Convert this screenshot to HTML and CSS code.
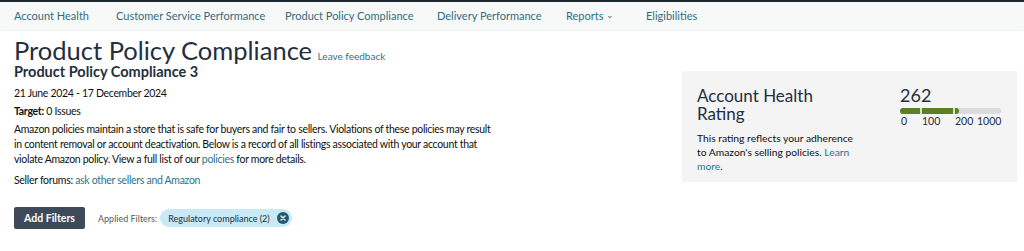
FILE: index.html
```html
<!DOCTYPE html>
<html lang="en">
<head>
  <meta charset="UTF-8" />
  <title>Product Policy Compliance</title>
  <link rel="stylesheet" href="styles.css">
</head>
<body>
  <nav class="topnav">
    <a href="#">Account Health</a>
    <a href="#">Customer Service Performance</a>
    <a href="#">Product Policy Compliance</a>
    <a href="#">Delivery Performance</a>
    <a href="#">Reports <span class="caret">&#8964;</span></a>
    <a href="#">Eligibilities</a>
  </nav>

  <div class="page">
    <div class="main">
      <h1>Product Policy Compliance <a href="#" class="feedback">Leave feedback</a></h1>
      <h2>Product Policy Compliance 3</h2>
      <p class="dates">21 June 2024 - 17 December 2024</p>
      <p class="target"><b>Target:</b> 0 Issues</p>
      <p class="desc">Amazon policies maintain a store that is safe for buyers and fair to sellers. Violations of these policies may result in content removal or account deactivation. Below is a record of all listings associated with your account that violate Amazon policy. View a full list of our <a href="#">policies</a> for more details.</p>
      <p class="forums">Seller forums: <a href="#">ask other sellers and Amazon</a></p>

      <div class="filters">
        <button class="add-btn">Add Filters</button>
        <span class="applied">Applied Filters:</span>
        <span class="chip">Regulatory compliance (2)
          <span class="chip-close">
            <svg width="12" height="12" viewBox="0 0 12 12"><circle cx="6" cy="6" r="6" fill="#1f5a6e"/><path d="M4 4 L8 8 M8 4 L4 8" stroke="#fff" stroke-width="1.4" stroke-linecap="round"/></svg>
          </span>
        </span>
      </div>
    </div>

    <div class="rating-card">
      <div class="rating-text">
        <h3>Account Health Rating</h3>
        <p>This rating reflects your adherence to Amazon's selling policies. <a href="#">Learn more</a>.</p>
      </div>
      <div class="rating-score">
        <div class="score">262</div>
        <div class="bar">
          <span class="seg seg1"></span>
          <span class="seg seg2"></span>
          <span class="seg seg3"></span>
        </div>
        <div class="ticks">
          <span class="t0">0</span><span class="t100">100</span><span class="t200">200</span><span class="t1000">1000</span>
        </div>
      </div>
    </div>
  </div>
</body>
</html>
```

FILE: styles.css
```css
body {
  margin: 0;
  font-family: 'Lato', 'Noto Sans', sans-serif;
  color: #0f1111;
  background: #fff;
}

a {
  color: #2a7487;
  text-decoration: none;
}

.topnav {
  border-top: 2px solid #1d2b30;
  background: #f7f8f8;
  height: 28px;
  display: flex;
  align-items: center;
  padding-left: 14px;
  box-shadow: 0 1px 2px rgba(0,0,0,0.06);
}

.topnav a {
  font-size: 11px;
  color: #2e6e80;
  position: relative;
  top: -1px;
}

.topnav a:nth-child(1) { width: 102px; }
.topnav a:nth-child(2) { width: 169px; }
.topnav a:nth-child(3) { width: 152px; }
.topnav a:nth-child(4) { width: 129px; }
.topnav a:nth-child(5) { width: 80px; }

.caret {
  font-size: 9px;
  position: relative;
  top: -2px;
}

.page {
  display: flex;
  padding: 0 7px 0 14px;
}

.main {
  flex: 1;
}

h1 {
  margin: 8px 0 0;
  font-size: 25.5px;
  font-weight: 400;
  line-height: 24px;
  color: #232f3e;
}

.feedback {
  font-size: 10px;
  line-height: 10px;
  margin-left: -1px;
}

h2 {
  margin: 1px 0 0;
  font-size: 14.5px;
  font-weight: 700;
  line-height: 18px;
  color: #232f3e;
}

p {
  margin: 0;
  font-size: 10.5px;
  line-height: 15px;
}

.main p {
  letter-spacing: -0.3px;
}

.dates {
  margin-top: 5px;
}

.target {
  margin-top: 3px;
}

.desc {
  width: 480px;
  margin-top: 3px;
}

.forums {
  margin-top: 6px;
}

.filters {
  display: flex;
  align-items: center;
  margin-top: 19px;
}

.add-btn {
  background: #3e4a59;
  color: #fff;
  border: none;
  border-radius: 2px;
  font-family: inherit;
  font-size: 10.5px;
  font-weight: 700;
  width: 71px;
  height: 22px;
  padding: 0;
}

.applied {
  font-size: 9px;
  color: #565959;
  margin-left: 13px;
}

.chip {
  display: inline-flex;
  align-items: center;
  background: #c8e9f5;
  border-radius: 9px;
  height: 18px;
  padding: 0 3px 0 8px;
  margin-left: 3px;
  font-size: 9px;
  color: #232f3e;
}

.chip-close {
  display: flex;
  margin-left: 7px;
}

.rating-card {
  width: 335px;
  height: 111px;
  margin-top: 41px;
  background: #f4f4f4;
  display: flex;
  padding: 0 0 0 15px;
  box-sizing: border-box;
}

.rating-text {
  width: 160px;
  padding-top: 16px;
}

.rating-text h3 {
  margin: 0 0 8px;
  font-size: 17px;
  font-weight: 400;
  line-height: 18px;
  color: #232f3e;
}

.rating-text p {
  font-size: 10.3px;
  line-height: 14px;
}

.rating-score {
  margin-left: 43px;
  padding-top: 14px;
  width: 101px;
}

.score {
  font-size: 18px;
  line-height: 20px;
  color: #232f3e;
}

.bar {
  display: flex;
  height: 6px;
  margin-top: 3px;
  border-radius: 3px;
  overflow: hidden;
  background: #d9dbdc;
}

.seg { height: 6px; }
.seg1 { width: 20px; background: #5a7f25; }
.seg2 { width: 31px; background: #5a7f25; margin-left: 2px; }
.seg3 { width: 4px; background: #5a7f25; margin-left: 2px; border-radius: 0 3px 3px 0; }

.ticks {
  position: relative;
  height: 14px;
  font-size: 10.5px;
  line-height: 14px;
  color: #232f3e;
}

.ticks span { position: absolute; top: 0; }
.t0 { left: 1px; }
.t100 { left: 22px; }
.t200 { left: 55px; }
.t1000 { left: 77px; }
```
